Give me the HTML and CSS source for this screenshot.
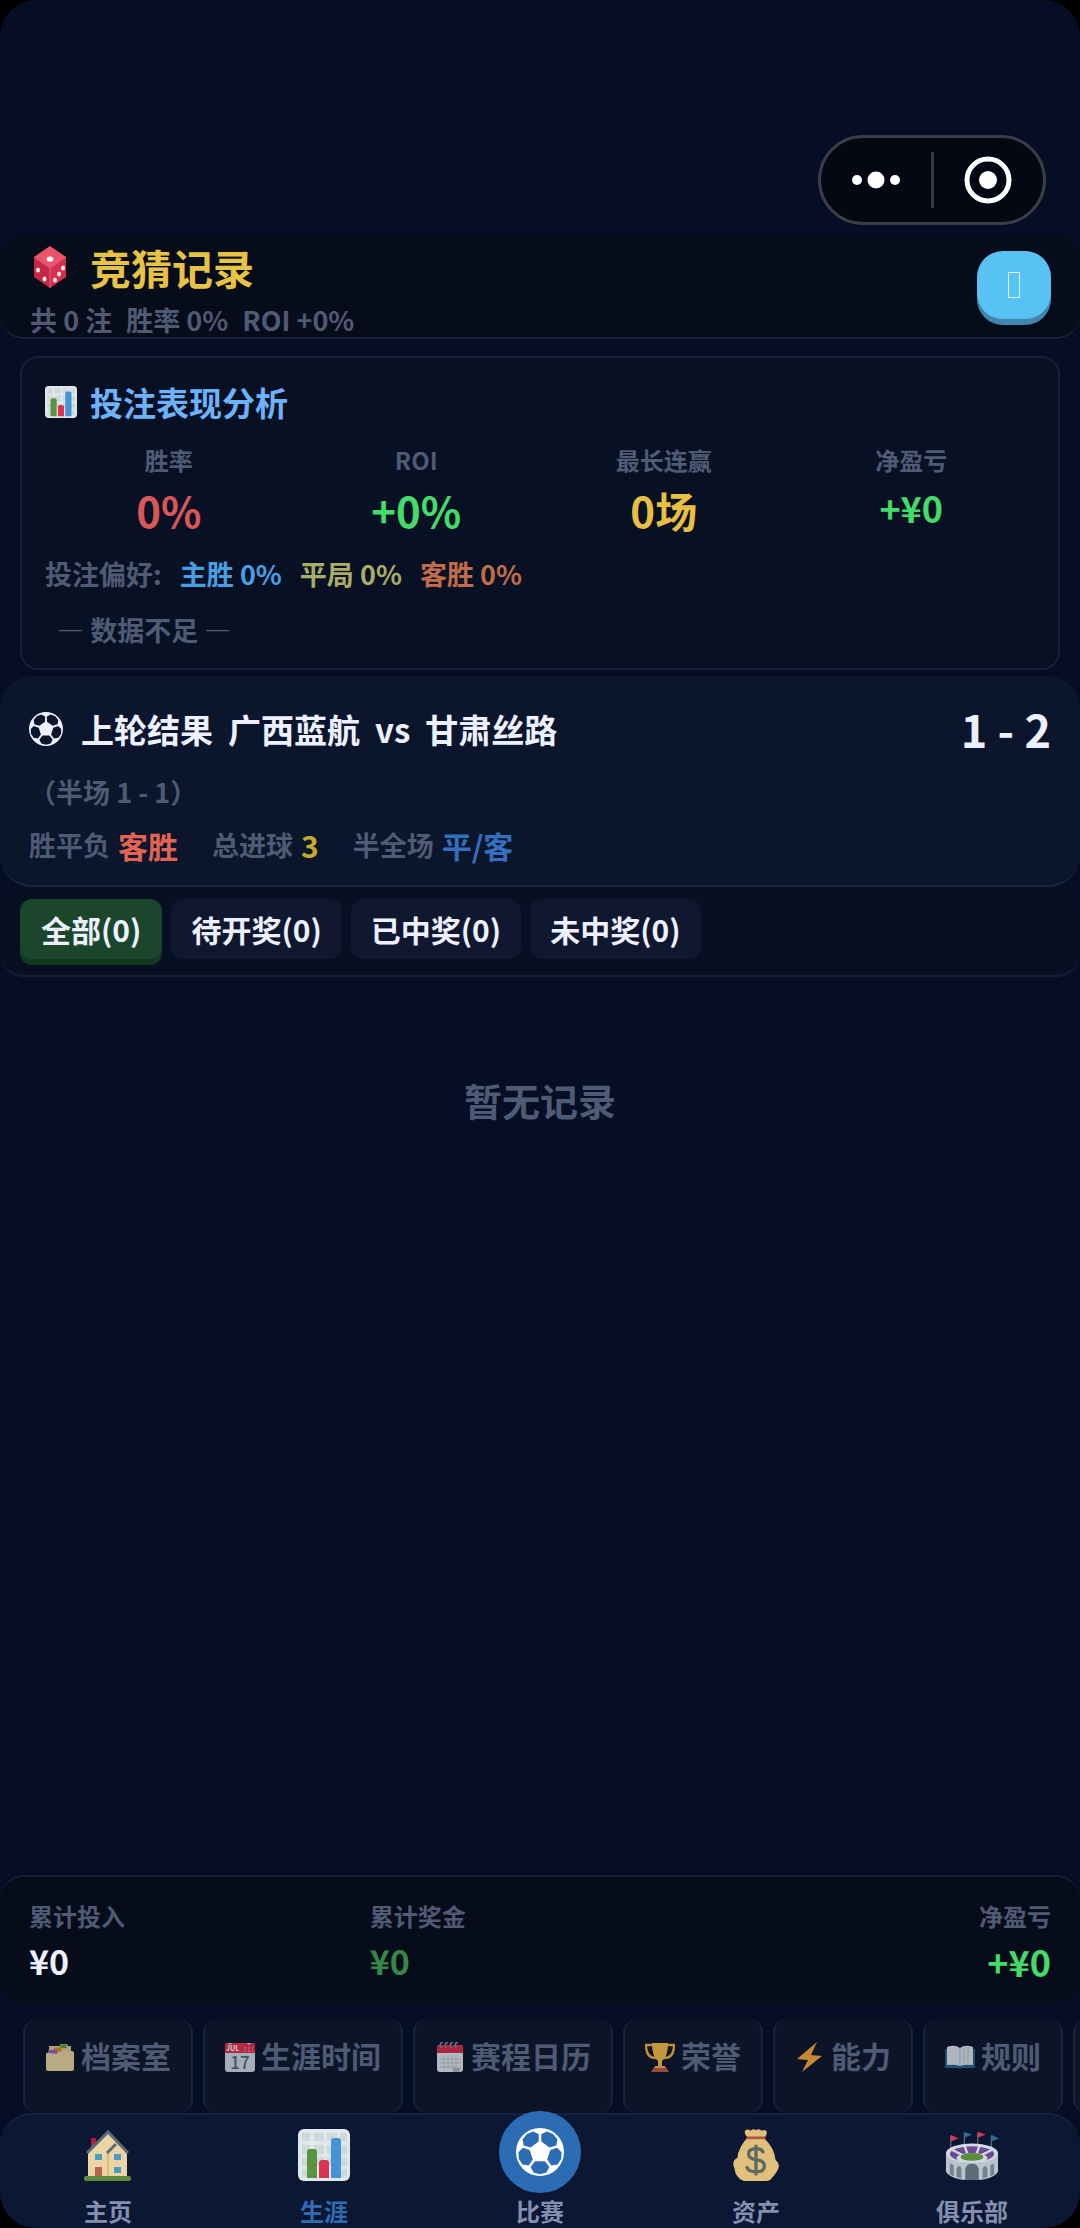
FILE: index.html
```html
<!DOCTYPE html>
<html lang="zh-CN">
<head>
  <meta charset="UTF-8" />
  <title>竞猜记录</title>
  <meta name="viewport" content="width=device-width, initial-scale=1.0"/>
  <link rel="stylesheet" href="styles.css">
</head>
<body>

  <!-- Iconos compartidos -->
  <svg class="sprite" aria-hidden="true">
    <symbol id="i-ball" viewBox="0 0 48 48">
      <circle cx="24" cy="24" r="24" fill="currentColor"/>
      <g class="ball-patch">
        <path id="patch" d="M19 33.2h10l4.4 5.8-2.9 5.5-6.5 1.8-6.5-1.8-2.9-5.5z"/>
        <use href="#patch" transform="rotate(72 24 24)"/>
        <use href="#patch" transform="rotate(144 24 24)"/>
        <use href="#patch" transform="rotate(216 24 24)"/>
        <use href="#patch" transform="rotate(288 24 24)"/>
      </g>
    </symbol>
    <symbol id="i-chart" viewBox="0 0 52 52">
      <rect width="52" height="52" rx="6" fill="#e1e8ec"/>
      <path d="M4 4h8v8H4zM16 4h10v8H16zM29 4h10v8H29zM42 4h7v8h-7zM4 16h8v9H4zM16 16h10v9H16zM29 16h10v9H29zM42 16h7v9h-7zM4 28h8v9H4zM16 28h10v9H16zM29 28h10v9H29zM42 28h7v9h-7zM4 40h8v8H4zM42 40h7v8h-7z" fill="#cdd9db"/>
      <path d="M9 49V23a3 3 0 0 1 3-3h4a3 3 0 0 1 3 3v26z" fill="#5b9440"/>
      <path d="M21 49V34a3 3 0 0 1 3-3h4a3 3 0 0 1 3 3v15z" fill="#dd3152"/>
      <path d="M33 49V12a3 3 0 0 1 3-3h4a3 3 0 0 1 3 3v37z" fill="#4394d6"/>
    </symbol>
    <symbol id="i-die" viewBox="0 0 40 42">
      <path d="M20 0 4 11l16 12 16-12z" fill="#e85469"/>
      <path d="M4 11v20l16 11V22z" fill="#c22845"/>
      <path d="M36 11v20L20 42V22z" fill="#d42f4d"/>
      <path d="M4 11l16 11 16-11M20 22v20" fill="none" stroke="#e0637a" stroke-width="1"/>
      <ellipse cx="20" cy="13" rx="3.400" ry="2.600" fill="#fff"/>
      <g fill="#f7e9ec">
        <ellipse cx="8" cy="24" rx="2" ry="2.600"/><ellipse cx="14.500" cy="33" rx="2" ry="2.600"/>
        <ellipse cx="33" cy="22" rx="2" ry="2.600"/><ellipse cx="29" cy="28" rx="2" ry="2.600"/><ellipse cx="25" cy="34" rx="2" ry="2.600"/>
      </g>
    </symbol>
    <symbol id="i-box" viewBox="0 0 30 30">
      <path d="M4 4h10l2-2h6l1 2h3v9H4z" fill="#d6c28c"/>
      <path d="M15 3l6-1 1 4h-7z" fill="#5f9a3c"/>
      <path d="M9 6l7-1 1 5H9z" fill="#d9882c"/>
      <path d="M3 8h9v5H3z" fill="#8a5bb8"/>
      <path d="M1 12q0-2 3-1l9 1 3-3h11q2 0 2 2v16q0 2-2 2H3q-2 0-2-2z" fill="#e5d09a"/>
    </symbol>
    <symbol id="i-date" viewBox="0 0 30 30">
      <rect y="1" width="30" height="29" rx="3" fill="#cdd5e0"/>
      <path d="M0 11V3q0-2 2-2h1q2 3 4 0h15q2 3 4 0h2q2 0 2 2v8z" fill="#dd2f4e"/>
      <path d="M19 6h2M23 6h2M27 6h1M19 9h2M23 9h2M27 9h1" stroke="#f2a0ad" stroke-width="1"/>
      <text x="1" y="9" font-size="7" font-weight="700" fill="#fff">JUL</text>
      <text x="15" y="27" font-size="17" font-weight="500" text-anchor="middle" fill="#4b6670">17</text>
    </symbol>
    <symbol id="i-calendar" viewBox="0 0 30 30">
      <rect x="2" y="3" width="26" height="27" rx="3" fill="#dfe1e6"/>
      <path d="M2 11V6q0-3 3-3h20q3 0 3 3v5z" fill="#d32948"/>
      <path d="M6 6q-2-6 2-5M11 6q-2-6 2-5M16 6q-2-6 2-5M21 6q-2-6 2-5" fill="none" stroke="#7f8894" stroke-width="1.500"/>
      <path d="M9 13v14M13 13v14M17 13v14M21 13v14M5 17h21M5 21h21M5 25h21" stroke="#b8bec8" stroke-width="1"/>
      <path d="M18 26h8l-2 4h-6z" fill="#a9b0ba"/>
    </symbol>
    <symbol id="i-cup" viewBox="0 0 30 30">
      <path d="M8 3H1q0 13 10 13M22 3h7q0 13-10 13" fill="none" stroke="#e8ae3e" stroke-width="2.500"/>
      <path d="M7 1h16q0 14-6 18v5h-4v-5Q7 15 7 1z" fill="#f0b845"/>
      <path d="M6 30l3-5h12l3 5z" fill="#b95c48"/>
      <path d="M10 24h10v2H10z" fill="#e8ae3e"/>
    </symbol>
    <symbol id="i-bolt" viewBox="0 0 30 30">
      <path d="M22 0 2 17l11 1-6 12 20-16-11-1z" fill="#f5a533"/>
    </symbol>
    <symbol id="i-book" viewBox="0 0 30 30">
      <path d="M0 7h30v19H17l-2 1-2-1H0z" fill="#2b5c7c"/>
      <path d="M2 5q8-3 13 1 5-4 13-1v18q-8-1-13 1-5-2-13-1z" fill="#d8dfe6"/>
      <path d="M15 6v18M19 6v15M23 5v16" stroke="#aab6c0" stroke-width="1"/>
    </symbol>
    <symbol id="i-home" viewBox="0 0 52 52">
      <path d="M9 9h5v9l-5 4z" fill="#b5173f"/>
      <path d="M6 23 26 4l19 19v25H6z" fill="#ecd5a5"/>
      <path d="M26 22v26" stroke="#d6b06c" stroke-width="1.500"/>
      <path d="M5 24 26 3l20 21M25 24l9-9" fill="none" stroke="#5c6a75" stroke-width="3"/>
      <path d="M13 25h7v6h-7zM32 25h7v6h-7zM32 38h7v6h-7z" fill="#4a9bc8"/>
      <path d="M13 38h7v10h-7z" fill="#b5634d"/>
      <rect x="2" y="47" width="47" height="5" rx="2" fill="#5d8a41"/>
    </symbol>
    <symbol id="i-money" viewBox="0 0 52 56">
      <path d="M17 9q-5-5-2-8 3-1 5 1 2-3 6-1 4-2 6 1 3-2 5 0 2 3-2 8 11 11 12 23 6 5 2 12-3 5-7 9-2 2-6 2H13q-5-1-9-8-1-6-2-8-2-6 4-9Q7 20 17 9z" fill="#e0c07c"/>
      <path d="M16 8h20v3H16z" fill="#b4553e"/>
      <path d="M34 26q-1-5-8-5-8 0-8 6 0 5 8 6 9 1 9 7t-9 6q-9 0-10-6M26 17v33" fill="none" stroke="#5e6a60" stroke-width="3.500"/>
    </symbol>
    <symbol id="i-stadium" viewBox="0 0 56 52">
      <path d="M6 22V6M20 18V3M34 18V3M48 22V6" stroke="#70849a" stroke-width="1"/>
      <path d="M6 5l8 4-8 3zM34 2l8 3-8 3z" fill="#d93654"/>
      <path d="M20 2l8 3-8 3zM48 5l8 4-8 3z" fill="#2e6a96"/>
      <path d="M1 24v19q5 9 27 9t27-9V24z" fill="#b9c3cb"/>
      <ellipse cx="28" cy="24" rx="27" ry="10" fill="#d3dae0"/>
      <ellipse cx="28" cy="25" rx="23" ry="8" fill="#70489a"/>
      <path d="M6 20l12 6M20 16l3 8M36 16l-3 8M50 20l-12 6" stroke="#d3dae0" stroke-width="2.500"/>
      <ellipse cx="28" cy="29" rx="16" ry="5" fill="#d3dae0"/>
      <ellipse cx="28" cy="28" rx="12" ry="4" fill="#5b8e3c"/>
      <path d="M21 52V41q1-6 7-6t7 6v11z" fill="#5b6b78"/>
      <path d="M12 49V40q3-5 5 0v10zM39 50V40q3-5 5 0v9zM5 46v-9q2-4 4 0v11zM47 48V37q2-4 4 0v9z" fill="#71818d"/>
    </symbol>
  </svg>

  <div class="app">

    <div class="status-area">
      <div class="capsule">
        <button title="更多">
          <svg width="48" height="20" viewBox="0 0 48 20"><g fill="#fff"><circle cx="5" cy="10" r="5"/><circle cx="24" cy="10" r="8.500"/><circle cx="43" cy="10" r="5"/></g></svg>
        </button>
        <span class="capsule-line"></span>
        <button title="关闭">
          <svg width="48" height="48" viewBox="0 0 48 48"><circle cx="24" cy="24" r="21" fill="none" stroke="#fff" stroke-width="5"/><circle cx="24" cy="24" r="9" fill="#fff"/></svg>
        </button>
      </div>
    </div>

    <header>
      <div>
        <h1><svg class="icon-die"><use href="#i-die"/></svg>竞猜记录</h1>
        <p class="resumen"><span>共 0 注</span><span>胜率 0%</span><span>ROI +0%</span></p>
      </div>
      <button class="btn-volver" title="返回">
        <svg width="12" height="26" viewBox="0 0 12 26"><rect x=".5" y=".5" width="11" height="25" fill="none" stroke="#d9f3ff"/></svg>
      </button>
    </header>

    <section class="analisis">
      <h2><svg class="icon-chart"><use href="#i-chart"/></svg>投注表现分析</h2>
      <div class="stats">
        <div class="stat"><span class="label">胜率</span><b class="rojo">0%</b></div>
        <div class="stat"><span class="label">ROI</span><b class="verde">+0%</b></div>
        <div class="stat"><span class="label">最长连赢</span><b class="amarillo">0场</b></div>
        <div class="stat"><span class="label">净盈亏</span><b class="verde neto">+¥0</b></div>
      </div>
      <p class="preferencia">
        <span>投注偏好:</span>
        <span class="pref-local">主胜 0%</span>
        <span class="pref-empate">平局 0%</span>
        <span class="pref-visita">客胜 0%</span>
      </p>
      <p class="sin-datos">— 数据不足 —</p>
    </section>

    <section class="resultado">
      <div class="partido">
        <h2><svg class="icon-ball"><use href="#i-ball"/></svg><span>上轮结果</span><span>广西蓝航</span><span>vs</span><span>甘肃丝路</span></h2>
        <b class="marcador">1 - 2</b>
      </div>
      <p class="medio-tiempo">（半场 1 - 1）</p>
      <div class="detalle">
        <span>胜平负<b class="det-rojo">客胜</b></span>
        <span>总进球<b class="det-oro">3</b></span>
        <span>半全场<b class="det-azul">平/客</b></span>
      </div>
    </section>

    <div class="filtros">
      <button class="filtro activo">全部(0)</button>
      <button class="filtro">待开奖(0)</button>
      <button class="filtro">已中奖(0)</button>
      <button class="filtro">未中奖(0)</button>
    </div>

    <main>暂无记录</main>

    <section class="totales">
      <div><span class="label">累计投入</span><b>¥0</b></div>
      <div><span class="label">累计奖金</span><b class="premio">¥0</b></div>
      <div class="total-neto"><span class="label">净盈亏</span><b class="verde">+¥0</b></div>
    </section>

    <div class="accesos">
      <button><svg><use href="#i-box"/></svg>档案室</button>
      <button><svg><use href="#i-date"/></svg>生涯时间</button>
      <button><svg><use href="#i-calendar"/></svg>赛程日历</button>
      <button><svg><use href="#i-cup"/></svg>荣誉</button>
      <button><svg><use href="#i-bolt"/></svg>能力</button>
      <button><svg><use href="#i-book"/></svg>规则</button>
      <button title="更多"></button>
    </div>

    <nav>
      <a href="#"><svg><use href="#i-home"/></svg>主页</a>
      <a href="#" class="activo"><svg><use href="#i-chart"/></svg>生涯</a>
      <a href="#" class="central"><span class="circulo"><svg><use href="#i-ball"/></svg></span>比赛</a>
      <a href="#"><svg><use href="#i-money"/></svg>资产</a>
      <a href="#"><svg><use href="#i-stadium"/></svg>俱乐部</a>
    </nav>

  </div>

</body>
</html>
```
FILE: styles.css
```css
* {
  box-sizing: border-box;
}

body {
  font-family: 'Noto Sans CJK SC', sans-serif;
  font-weight: 700;
  background: #000;
  color: #edf1ff;
  margin: 0;
}

h1, h2, p {
  margin: 0;
}

b {
  font-weight: 700;
}

button {
  font: inherit;
  color: inherit;
  border: none;
  padding: 0;
  cursor: pointer;
}

svg {
  display: block;
  flex: none;
}

.sprite {
  display: none;
}

.app {
  min-height: 100vh;
  display: flex;
  flex-direction: column;
  background: #050e24;
  border-radius: 36px;
  overflow: hidden;
}

/* Zona superior con la cápsula */
.status-area {
  height: 236px;
  padding: 135px 34px 0 0;
  display: flex;
  justify-content: flex-end;
}

.capsule {
  width: 228px;
  height: 90px;
  display: flex;
  align-items: center;
  background: #030813;
  border: 3px solid #3a3d48;
  border-radius: 45px;
}

.capsule button {
  flex: 1;
  display: flex;
  justify-content: center;
  background: none;
}

.capsule-line {
  width: 3px;
  height: 56px;
  background: #343842;
}

header {
  padding: 3px 29px 0 30px;
  display: flex;
  justify-content: space-between;
  background: #060c1a;
  border-bottom: 2px solid #15203a;
  border-radius: 24px;
}

h1 {
  display: flex;
  align-items: center;
  gap: 20px;
  font-size: 41px;
  line-height: 56px;
  color: #e6c245;
}

.icon-die {
  width: 40px;
  height: 42px;
}

.resumen {
  display: flex;
  gap: 14px;
  margin-top: 8px;
  font-size: 27px;
  line-height: 34px;
  color: #4f5a75;
}

.btn-volver {
  width: 74px;
  height: 68px;
  margin-top: 12px;
  display: flex;
  align-items: center;
  justify-content: center;
  background: #59c2f5;
  border-radius: 26px;
  box-shadow: 0 6px 0 #4187ad;
}

/* Tarjeta de análisis */
.analisis {
  margin: 17px 20px 6px;
  padding: 20px 23px 18px;
  background: #081123;
  border: 2px solid #15203a;
  border-radius: 18px;
}

h2 {
  display: flex;
  align-items: center;
  font-size: 33px;
}

.analisis h2 {
  gap: 13px;
  line-height: 48px;
  color: #6db2fc;
}

.icon-chart {
  width: 32px;
  height: 32px;
}

.stats {
  display: grid;
  grid-template-columns: repeat(4, 1fr);
  margin-top: 16px;
  text-align: center;
}

.label {
  display: block;
  font-size: 24px;
  line-height: 36px;
  color: #4f5a75;
}

.stat b {
  display: block;
  margin-top: 2px;
  font-size: 42px;
  line-height: 60px;
}

.stat .neto {
  font-size: 36px;
  line-height: 54px;
}

.rojo {
  color: #da5658;
}

.verde {
  color: #43dc6b;
}

.amarillo {
  color: #e8bf43;
}

.preferencia {
  display: flex;
  gap: 18px;
  margin-top: 14px;
  font-size: 27px;
  line-height: 40px;
  color: #4f5a75;
}

.pref-local {
  color: #499ee2;
}

.pref-empate {
  color: #a9ad68;
}

.pref-visita {
  color: #c16c4b;
}

.sin-datos {
  margin-top: 16px;
  padding-left: 12px;
  font-size: 27px;
  line-height: 40px;
  color: #4f5a75;
}

/* Resultado anterior */
.resultado {
  padding: 23px 29px 20px;
  background: #0b162d;
  border-bottom: 2px solid #18263c;
  border-radius: 32px;
}

.partido {
  display: flex;
  justify-content: space-between;
  line-height: 60px;
}

.partido h2 {
  gap: 15px;
}

.icon-ball {
  width: 34px;
  height: 34px;
  margin-right: 3px;
}

.ball-patch {
  fill: var(--patch, #0b162d);
}

.marcador {
  font-size: 45px;
}

.medio-tiempo {
  margin-top: 13px;
  font-size: 27px;
  line-height: 40px;
  color: #4f5a75;
}

.detalle {
  display: flex;
  gap: 34px;
  margin-top: 13px;
  font-size: 27px;
  line-height: 40px;
  color: #4f5a75;
}

.detalle span {
  display: flex;
}

.detalle b {
  margin-left: 8px;
  font-size: 30px;
}

.det-rojo {
  color: #e26554;
}

.det-oro {
  color: #c5a92a;
}

.det-azul {
  color: #346fbd;
}

/* Filtros */
.filtros {
  display: flex;
  gap: 9px;
  padding: 12px 20px 16px;
  background: #071022;
  border-bottom: 2px solid #15203a;
  border-radius: 24px;
}

.filtro {
  height: 60px;
  padding: 0 20px;
  font-size: 30px;
  background: #10182f;
  border-radius: 12px;
}

.filtro.activo {
  padding: 0 21px;
  background: #1b462b;
  box-shadow: 0 6px 0 #14381f;
}

main {
  flex: 1;
  padding-top: 95px;
  text-align: center;
  font-size: 38px;
  line-height: 56px;
  color: #4f5a75;
}

.totales {
  display: grid;
  grid-template-columns: repeat(3, 1fr);
  padding: 21px 29px 18px;
  background: #060c1a;
  border-top: 2px solid #15203a;
  border-radius: 24px;
}

.totales b {
  display: block;
  margin-top: 3px;
  font-size: 34px;
  line-height: 48px;
}

.totales .premio {
  color: #358746;
}

.total-neto {
  text-align: right;
}

.total-neto b {
  font-size: 36px;
}

/* Accesos rápidos */
.accesos {
  display: flex;
  gap: 10px;
  margin-top: 16px;
  padding-left: 23px;
  overflow: hidden;
}

.accesos button {
  flex: none;
  height: 94px;
  display: flex;
  align-items: flex-start;
  gap: 6px;
  padding: 15px 20px 0;
  font-size: 30px;
  line-height: 42px;
  color: #4f5a75;
  background: #0c1527;
  border: solid #162440;
  border-width: 0 2px;
  border-radius: 14px;
}

.accesos svg {
  width: 30px;
  height: 30px;
  margin-top: 8px;
  opacity: 0.8;
}

/* Barra de navegación inferior */
nav {
  display: grid;
  grid-template-columns: repeat(5, 1fr);
  background: #0c1733;
  border-top: 2px solid #142343;
  border-radius: 32px 32px 0 0;
}

nav a {
  display: flex;
  flex-direction: column;
  align-items: center;
  padding-top: 14px;
  font-size: 24px;
  line-height: 34px;
  color: #8590b1;
  text-decoration: none;
}

nav a svg {
  width: 54px;
  height: 52px;
  margin-bottom: 13px;
}

nav a.activo {
  color: #2f6db5;
}

.circulo {
  --patch: #2b6cb4;
  width: 82px;
  height: 82px;
  margin: -18px 0 1px;
  display: flex;
  align-items: center;
  justify-content: center;
  color: #fff;
  background: #2b6cb4;
  border-radius: 50%;
}

nav .circulo svg {
  width: 48px;
  height: 48px;
  margin: 0;
}
```
